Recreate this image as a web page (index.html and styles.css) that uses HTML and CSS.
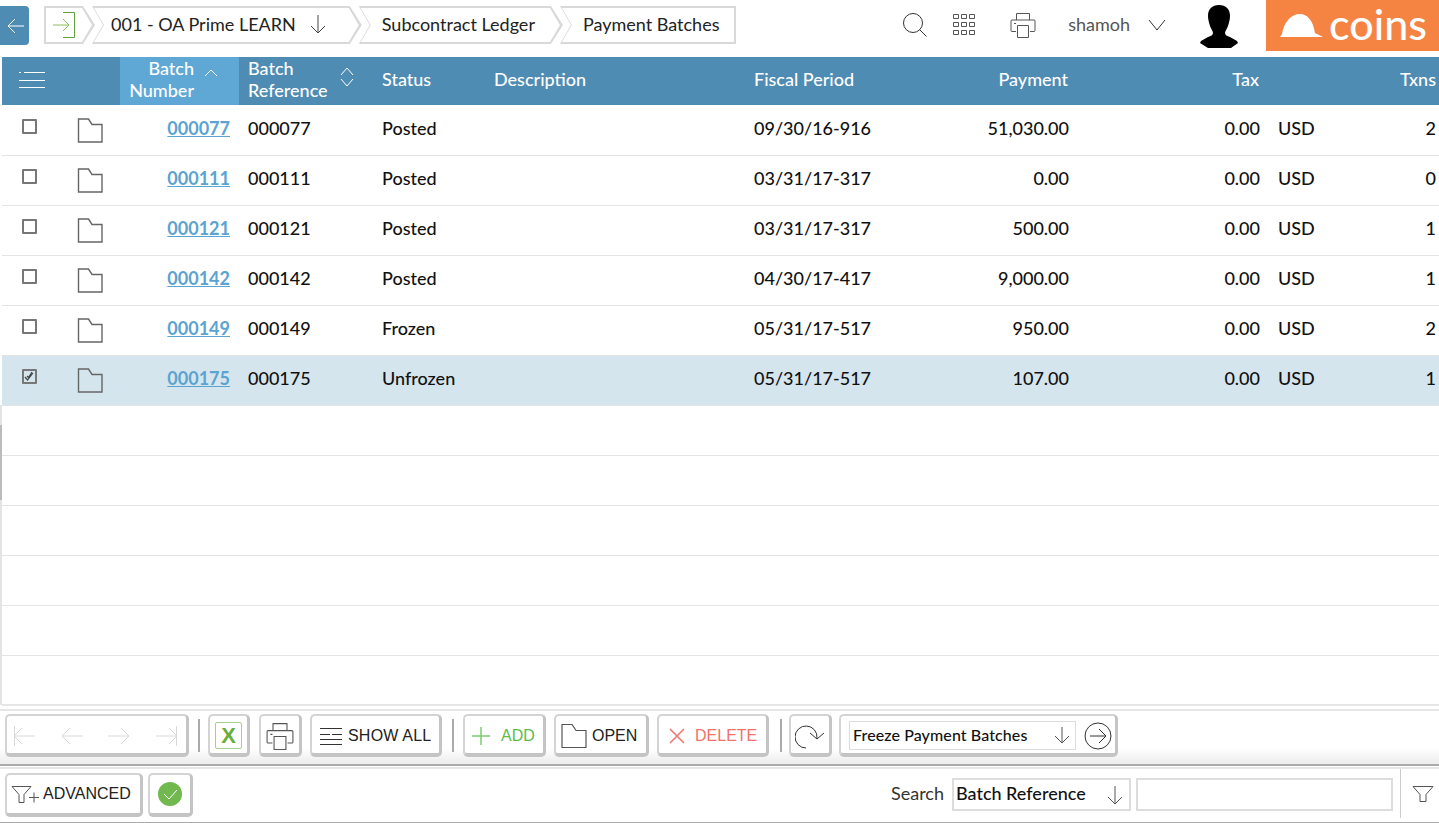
FILE: index.html
```html
<!DOCTYPE html>
<html lang="en">
<head>
  <meta charset="UTF-8">
  <title>Payment Batches</title>
  <link rel="stylesheet" href="styles.css">
</head>
<body>
  <div class="page">
    <div class="edge-strip"><span class="edge-thumb"></span></div>
    <header class="topbar">
      <button class="back-btn">
        <svg width="20" height="20" viewBox="0 0 20 20"><path d="M18 10H2M9 3l-7 7 7 7" /></svg>
      </button>
      <nav class="crumbs">
        <a class="crumb crumb-first">
          <svg width="24" height="28" viewBox="0 0 24 28"><path class="green" d="M10 1.5h11.5v25H10" /><path class="lime" d="M0 14h16M10 8l6 6-6 6" /></svg>
        </a>
        <a class="crumb crumb-project">001 - OA Prime LEARN
          <svg class="crumb-arrow" width="20" height="20" viewBox="0 0 20 20"><path d="M10 1v18M3 12l7 7 7-7" /></svg>
        </a>
        <a class="crumb">Subcontract Ledger</a>
        <a class="crumb crumb-last">Payment Batches</a>
      </nav>
      <div class="top-tools">
        <svg class="tool-search" width="26" height="26" viewBox="0 0 26 26"><circle cx="11" cy="11" r="9.5" /><path d="M17.5 17.5l7 7" /></svg>
        <svg class="tool-grid" width="22" height="22" viewBox="0 0 22 22">
          <path d="M.5.5h5v4h-5zM8.5.5h5v4h-5zM16.5.5h5v4h-5zM.5 8.5h5v4h-5zM8.5 8.5h5v4h-5zM16.5 8.5h5v4h-5zM.5 16.5h5v4h-5zM8.5 16.5h5v4h-5zM16.5 16.5h5v4h-5z" />
        </svg>
        <svg class="tool-print" width="26" height="26" viewBox="0 0 26 26"><path d="M6.5 8V1.500h13V8M6 19.500H2a1 1 0 0 1-1-1V9a1 1 0 0 1 1-1h22a1 1 0 0 1 1 1v9.500a1 1 0 0 1-1 1h-4M7.500 13.500h11v12h-11zM4 11.500h2" /></svg>
        <span class="user-name">shamoh</span>
        <svg class="tool-caret" width="18" height="12" viewBox="0 0 18 12"><path d="M1 1l8 10 8-10" /></svg>
        <svg class="avatar" width="38" height="43" viewBox="0 0 38 43"><path d="M19 0c7 0 11 4 11 11 0 3-1 7-2 10-1 3-3 5-3 7 0 2 2 3 5 4l7 4 1 2-7 5H8l-8-5 1-2 7-4c3-1 5-2 5-4 0-2-2-4-3-7-1-3-2-7-2-10C8 4 12 0 19 0z" /></svg>
        <div class="logo">
          <svg width="43" height="23" viewBox="0 0 43 23"><path d="M0 23l2-3C4 8 11 0 20 0c7 0 13 6 15 19l8 4z" /></svg>
          <span class="logo-text">coins</span>
        </div>
      </div>
    </header>

    <main class="grid-wrap">
      <table class="grid">
        <colgroup>
          <col class="c-check"><col class="c-folder"><col class="c-num"><col class="c-ref"><col class="c-status"><col class="c-desc"><col class="c-period"><col class="c-pay"><col class="c-tax"><col class="c-cur"><col class="c-txn">
        </colgroup>
        <thead>
          <tr>
            <th class="menu-cell">
              <svg width="26" height="18" viewBox="0 0 26 18"><path d="M0 1.500h2M5 1.500h21M0 9.500h26M0 16.500h26" /></svg>
            </th>
            <th></th>
            <th class="sorted">
              <div class="th-inner th-right"><span class="th-label">Batch<br>Number</span>
                <svg width="14" height="8" viewBox="0 0 14 8"><path d="M1 7l6-6 6 6" /></svg>
              </div>
            </th>
            <th>
              <div class="th-inner"><span>Batch<br>Reference</span>
                <svg width="14" height="20" viewBox="0 0 14 20"><path d="M1 8l6-7 6 7M1 12l6 7 6-7" /></svg>
              </div>
            </th>
            <th>Status</th>
            <th>Description</th>
            <th>Fiscal Period</th>
            <th class="num">Payment</th>
            <th class="num">Tax</th>
            <th></th>
            <th class="num">Txns</th>
          </tr>
        </thead>
        <tbody id="rows"></tbody>
      </table>
    </main>

    <section class="toolbar">
      <div class="btn nav-group">
        <svg width="24" height="24" viewBox="0 0 24 24"><path d="M2.500 2v20M23 12H2M10 4l-8 8 8 8" /></svg>
        <svg width="24" height="24" viewBox="0 0 24 24"><path d="M23 12H2M10 4l-8 8 8 8" /></svg>
        <svg width="24" height="24" viewBox="0 0 24 24"><path d="M1 12h21M14 4l8 8-8 8" /></svg>
        <svg width="24" height="24" viewBox="0 0 24 24"><path d="M21.500 2v20M1 12h21M14 4l8 8-8 8" /></svg>
      </div>
      <span class="sep"></span>
      <button class="btn btn-excel"><span class="excel-mark">X</span></button>
      <button class="btn btn-print">
        <svg width="28" height="28" viewBox="0 0 26 26"><path d="M6.500 8V1.500h13V8M6 19.500H2a1 1 0 0 1-1-1V9a1 1 0 0 1 1-1h22a1 1 0 0 1 1 1v9.500a1 1 0 0 1-1 1h-4M7.500 13.500h11v12h-11zM4 11.500h2" /></svg>
      </button>
      <button class="btn btn-showall">
        <svg width="24" height="20" viewBox="0 0 24 20"><path d="M1 2.500h22M1 8.500h10M13 8.500h10M1 13.500h22M1 18.500h22" /></svg>SHOW ALL
      </button>
      <span class="sep sep-2"></span>
      <button class="btn btn-add">
        <svg width="20" height="20" viewBox="0 0 20 20"><path d="M10 1v18M1 10h18" /></svg>ADD
      </button>
      <button class="btn btn-open">
        <svg width="26" height="24" viewBox="0 0 26 24"><path d="M1 23.500V.5h10l4 6h10v17z" /></svg>OPEN
      </button>
      <button class="btn btn-delete">
        <svg width="18" height="18" viewBox="0 0 18 18"><path d="M2 2l14 14M16 2L2 16" /></svg>DELETE
      </button>
      <span class="sep sep-3"></span>
      <button class="btn btn-refresh">
        <svg width="30" height="26" viewBox="0 0 30 26"><path d="M22 15A11 11 0 1 0 11 25M15 10l7 6 7-6" /></svg>
      </button>
      <div class="btn action-group">
        <div class="action-select">Freeze Payment Batches
          <svg width="16" height="18" viewBox="0 0 16 18"><path d="M8 1v16M1 10l7 7 7-7" /></svg>
        </div>
        <svg width="28" height="28" viewBox="0 0 28 28"><circle cx="14" cy="14" r="13" /><path d="M6 14h16M15 7l7 7-7 7" /></svg>
      </div>
    </section>

    <footer class="searchbar">
      <button class="btn btn-advanced">
        <svg width="28" height="22" viewBox="0 0 28 22"><path d="M1 3.500h19l-7 8v8H8v-8zM18 14.500h10M23 9.500v10" /></svg>ADVANCED
      </button>
      <button class="btn btn-ok">
        <svg width="24" height="24" viewBox="0 0 24 24"><circle class="ok-fill" cx="12" cy="12" r="12" /><path d="M6 12l5 5 8-9" /></svg>
      </button>
      <label class="search-label">Search</label>
      <div class="search-select">Batch Reference
        <svg width="20" height="20" viewBox="0 0 20 20"><path d="M10 1v18M3 12l7 7 7-7" /></svg>
      </div>
      <input class="search-input" type="text">
      <div class="filter-cell">
        <svg width="22" height="20" viewBox="0 0 22 20"><path d="M1 2.500h20l-7 8v7H8v-7z" /></svg>
      </div>
    </footer>
  </div>

  <script>
    // Batch rows
    const batches = [
      ['000077', 'Posted', '09/30/16-916', '51,030.00', '2'],
      ['000111', 'Posted', '03/31/17-317', '0.00', '0'],
      ['000121', 'Posted', '03/31/17-317', '500.00', '1'],
      ['000142', 'Posted', '04/30/17-417', '9,000.00', '1'],
      ['000149', 'Frozen', '05/31/17-517', '950.00', '2'],
      ['000175', 'Unfrozen', '05/31/17-517', '107.00', '1'],
    ];
    const folder = '<svg class="folder" width="26" height="25" viewBox="0 0 26 25"><path d="M1.500 24V1h10l3.500 5.500h10V24z" /></svg>';
    const tick = '<svg width="11" height="11" viewBox="0 0 11 11"><path d="M1 6l2.500 3L9 2M3 5l1.500 1.500L8 1" /></svg>';

    const rows = document.getElementById('rows');
    batches.forEach((b, i) => {
      const row = document.createElement('tr');
      const selected = i === batches.length - 1;
      if (selected) row.className = 'selected';
      row.innerHTML = `
        <td class="check-cell"><span class="check">${selected ? tick : ''}</span></td>
        <td class="folder-cell">${folder}</td>
        <td class="num"><a class="batch-link">${b[0]}</a></td>
        <td>${b[0]}</td>
        <td>${b[1]}</td>
        <td></td>
        <td>${b[2]}</td>
        <td class="num">${b[3]}</td>
        <td class="num">0.00</td>
        <td>USD</td>
        <td class="num">${b[4]}</td>`;
      rows.appendChild(row);
    });
    // Empty rows fill the rest of the grid
    for (let i = 0; i < 6; i++) {
      const row = document.createElement('tr');
      row.innerHTML = '<td colspan="11"></td>';
      rows.appendChild(row);
    }
  </script>
</body>
</html>
```

FILE: styles.css
```css
body {
  font-family: Lato, Arial, sans-serif;
  margin: 0;
  padding: 0;
  background-color: #fff;
  color: #111;
  overflow: hidden;
}

svg {
  fill: none;
  stroke: #555;
  stroke-width: 1;
  flex: none;
}

button {
  font-family: inherit;
}

.page {
  position: relative;
  display: flex;
  flex-direction: column;
  height: 823px;
  padding-left: 2px;
}

/* Thin scroll strip on the left edge */
.edge-strip {
  position: absolute;
  left: 0;
  top: 405px;
  width: 2px;
  height: 300px;
  background-color: #e4e4e4;
}

.edge-thumb {
  display: block;
  height: 75px;
  margin-top: 20px;
  background-color: #bbb;
}

/* Top bar */
.topbar {
  display: flex;
  height: 57px;
  flex: none;
  margin-left: -2px;
}

.back-btn {
  width: 29px;
  height: 39px;
  margin-top: 6px;
  padding: 0 0 0 2px;
  border: none;
  border-radius: 0 4px 4px 0;
  background-color: #4f8cb3;
}

.back-btn svg {
  stroke: #fff;
  display: block;
  margin: auto;
}

.crumbs {
  display: flex;
  height: 38px;
  margin: 6px 0 0 15px;
}

.crumb {
  position: relative;
  display: flex;
  align-items: center;
  height: 38px;
  box-sizing: border-box;
  margin-right: -3px;
  padding: 0 28px 2px 23px;
  font-size: 18px;
  color: #222;
  background-color: #d9d9d9;
  clip-path: polygon(0 0, calc(100% - 12px) 0, 100% 50%, calc(100% - 12px) 100%, 0 100%, 11px 50%);
  z-index: 0;
}

.crumb::before {
  content: "";
  position: absolute;
  inset: 2px;
  background-color: #fff;
  clip-path: polygon(0 0, calc(100% - 11px) 0, calc(100% - 1px) 50%, calc(100% - 11px) 100%, 0 100%, 10px 50%);
  z-index: -1;
}

.crumb-first {
  padding: 0 18px 0 9px;
  clip-path: polygon(0 0, calc(100% - 12px) 0, 100% 50%, calc(100% - 12px) 100%, 0 100%);
}

.crumb-first::before {
  clip-path: polygon(0 0, calc(100% - 11px) 0, calc(100% - 1px) 50%, calc(100% - 11px) 100%, 0 100%);
}

.crumb-project {
  padding: 0 34px 2px 19px;
}

.crumb-last {
  margin-right: 0;
  padding-right: 17px;
  clip-path: polygon(0 0, 100% 0, 100% 100%, 0 100%, 11px 50%);
}

.crumb-last::before {
  clip-path: polygon(0 0, 100% 0, 100% 100%, 0 100%, 10px 50%);
}

.crumb-arrow {
  margin-left: 12px;
  stroke: #444;
}

.green {
  stroke: #5f9e3c;
}

.lime {
  stroke: #8cc063;
}

.top-tools {
  display: flex;
  align-items: flex-start;
  margin-left: auto;
}

.tool-search {
  margin: 12px 0 0 0;
  stroke: #333;
}

.tool-grid {
  margin: 14px 0 0 25px;
}

.tool-print {
  margin: 12px 0 0 35px;
}

.user-name {
  margin: 13px 0 0 32px;
  font-size: 18px;
  color: #555;
}

.tool-caret {
  margin: 19px 0 0 18px;
  stroke: #333;
}

.avatar {
  margin: 5px 0 0 34px;
  fill: #000;
  stroke: none;
}

.logo {
  display: flex;
  align-items: center;
  width: 173px;
  height: 51px;
  margin-left: 28px;
  padding-left: 14px;
  box-sizing: border-box;
  background-color: #f58442;
}

.logo svg {
  fill: #fff;
  stroke: none;
  margin-top: -1px;
}

.logo-text {
  margin: -5px 0 0 6px;
  font-size: 43px;
  font-weight: 500;
  line-height: 1;
  color: #fff;
}

/* Grid */
.grid-wrap {
  flex: 1;
  overflow: hidden;
  border-bottom: 2px solid #e6e6e6;
}

.grid {
  width: 1437px;
  table-layout: fixed;
  border-collapse: separate;
  border-spacing: 0;
  font-size: 18px;
}

.c-check { width: 54px; }
.c-folder { width: 64px; }
.c-num { width: 119px; }
.c-ref { width: 134px; }
.c-status { width: 112px; }
.c-desc { width: 260px; }
.c-period { width: 205px; }
.c-pay { width: 128px; }
.c-tax { width: 191px; }
.c-cur { width: 71px; }
.c-txn { width: 99px; }

.grid th {
  box-sizing: border-box;
  height: 48px;
  padding: 0 9px 4px;
  background-color: #4f8cb3;
  color: #fff;
  font-weight: 500;
  line-height: 22px;
  text-align: left;
}

.grid th.num {
  padding-right: 10px;
  text-align: right;
}

.grid th.sorted {
  background-color: #5fa8d6;
}

.grid th svg {
  stroke: #fff;
}

.grid th.menu-cell {
  padding: 0 0 3px 17px;
}

.menu-cell svg {
  display: block;
}

.th-inner {
  display: flex;
  align-items: center;
  gap: 12px;
}

.th-right {
  justify-content: flex-end;
  padding-right: 12px;
  gap: 10px;
}

.th-label {
  text-align: right;
}

.th-right svg {
  margin-bottom: 8px;
}

.th-inner > svg:last-child {
  margin-top: -4px;
}

.grid td {
  box-sizing: border-box;
  height: 50px;
  padding: 0 9px 5px;
  border-top: 1px solid #e4e4e4;
  font-weight: 500;
  color: #111;
}

.grid tbody tr:first-child td {
  border-top-color: #fff;
}

.grid td.num {
  text-align: right;
}

.grid td:last-child.num,
.grid th:last-child.num {
  padding-right: 3px;
}

.selected td {
  background-color: #d5e5ee;
}

.batch-link {
  color: #5ba3d0;
  font-weight: 700;
  text-decoration: underline;
}

.grid td.check-cell {
  padding: 0 0 8px 20px;
  line-height: 0;
}

.check {
  display: inline-flex;
  align-items: center;
  justify-content: center;
  width: 15px;
  height: 15px;
  box-sizing: border-box;
  border: 2px solid #777;
  border-radius: 1px;
}

.check svg {
  stroke: #444;
  stroke-width: 1.2;
}

.grid td.folder-cell {
  padding: 0 0 1px 21px;
  line-height: 0;
}

.folder {
  stroke: #666;
  stroke-width: 1.4;
}

/* Toolbars */
.toolbar {
  display: flex;
  align-items: flex-start;
  flex: none;
  height: 57px;
  margin: 3px 0 0 -2px;
  padding: 3px 0 0 5px;
  box-sizing: border-box;
  border-top: 2px solid #e6e6e6;
  border-bottom: 2px solid #aaa;
  background: linear-gradient(#fff 70%, #ececec);
}

.btn {
  display: flex;
  align-items: center;
  height: 43px;
  box-sizing: border-box;
  border: 2px solid #d4d4d4;
  border-right: 3px solid #c4c4c4;
  border-bottom: 4px solid #c4c4c4;
  border-radius: 5px;
  background-color: #fff;
  font-family: "Liberation Sans", Arial, sans-serif;
  font-size: 16px;
  color: #222;
  padding: 0;
}

.toolbar .btn {
  padding-top: 2px;
}

.nav-group {
  justify-content: space-between;
  width: 184px;
  padding: 0 7px 0 5px;
}

.nav-group svg {
  stroke: #d8d8d8;
}

.sep {
  width: 2px;
  height: 33px;
  margin: 5px 8px 0 9px;
  background-color: #aaa;
}

.sep-2 {
  margin: 5px 9px 0 10px;
}

.sep-3 {
  margin: 5px 7px 0 11px;
}

.btn-excel {
  justify-content: center;
  width: 42px;
  margin-right: 9px;
}

.excel-mark {
  width: 27px;
  height: 27px;
  box-sizing: border-box;
  border: 1px solid #a5cf8b;
  border-radius: 2px;
  color: #6aad3d;
  font-size: 22px;
  font-weight: 900;
  line-height: 25px;
  text-align: center;
}

.btn-print {
  justify-content: center;
  width: 43px;
  margin-right: 8px;
}

.btn-showall {
  gap: 5px;
  width: 132px;
  padding-left: 7px;
  letter-spacing: .2px;
}

.btn-showall svg {
  stroke: #333;
}

.btn-add {
  gap: 10px;
  width: 83px;
  padding-left: 6px;
  margin-right: 8px;
  color: #5dbb4a;
}

.btn-add svg {
  stroke: #7ccb6b;
  stroke-width: 1.5;
}

.btn-open {
  gap: 5px;
  width: 95px;
  padding-left: 5px;
  margin-right: 8px;
}

.btn-open svg {
  stroke-width: 1.2;
}

.btn-delete {
  gap: 9px;
  width: 112px;
  padding-left: 9px;
  color: #f2736b;
}

.btn-delete svg {
  stroke: #f2736b;
  stroke-width: 1.5;
}

.btn-refresh {
  justify-content: center;
  width: 43px;
  margin-right: 7px;
}

.btn-refresh svg {
  stroke: #333;
}

.action-group {
  width: 279px;
  padding-left: 8px;
  gap: 8px;
}

.action-group > svg {
  stroke: #333;
}

.action-select {
  display: flex;
  align-items: center;
  justify-content: space-between;
  width: 227px;
  height: 29px;
  box-sizing: border-box;
  padding: 0 5px 2px 3px;
  border: 1px solid #ddd;
  font-family: Lato, Arial, sans-serif;
  font-size: 16px;
  font-weight: 500;
  letter-spacing: .1px;
  color: #111;
}

.searchbar {
  display: flex;
  align-items: flex-start;
  flex: none;
  height: 56px;
  margin: 1px 0 0 -2px;
  padding: 4px 0 0 5px;
  box-sizing: border-box;
  border-top: 2px solid #e6e6e6;
  border-bottom: 1px solid #aaa;
}

.btn-advanced {
  gap: 4px;
  width: 138px;
  height: 44px;
  padding-left: 4px;
  margin-right: 5px;
}

.btn-ok {
  justify-content: center;
  width: 45px;
  height: 44px;
}

.ok-fill {
  fill: #71b84f;
  stroke: none;
}

.btn-ok svg path {
  stroke: #fff;
}

.search-label {
  margin: 9px 8px 0 auto;
  font-size: 18px;
  color: #333;
}

.search-select {
  display: flex;
  align-items: center;
  justify-content: space-between;
  width: 179px;
  height: 33px;
  margin-top: 5px;
  box-sizing: border-box;
  padding: 0 4px 3px 2px;
  border: 2px solid #ddd;
  font-size: 18px;
  font-weight: 500;
}

.search-select svg {
  margin-top: 4px;
}

.search-input {
  width: 257px;
  height: 33px;
  margin: 5px 0 0 5px;
  box-sizing: border-box;
  border: 2px solid #ddd;
}

.filter-cell {
  display: flex;
  align-items: center;
  justify-content: flex-end;
  width: 39px;
  height: 49px;
  box-sizing: border-box;
  margin: -4px 0 0 7px;
  padding-right: 5px;
  border-left: 1px solid #ccc;
}
```
